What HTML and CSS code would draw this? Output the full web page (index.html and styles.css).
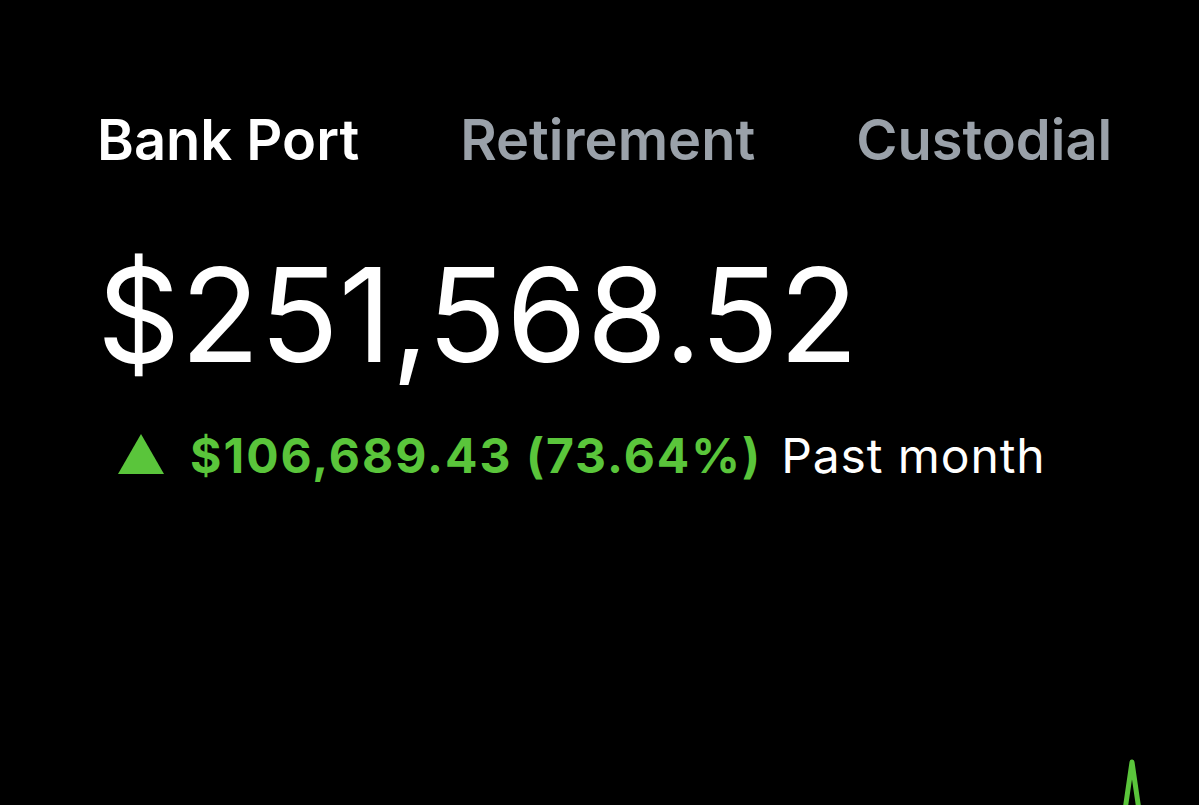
FILE: index.html
```html
<!DOCTYPE html>
<html lang="en">
<head>
  <meta charset="UTF-8">
  <meta name="viewport" content="width=device-width, initial-scale=1.0">
  <title>Portfolio</title>
  <link rel="stylesheet" href="styles.css">
</head>
<body>
  <div id="container">
    <nav class="tabs">
      <span class="tab active">Bank Port</span>
      <span class="tab">Retirement</span>
      <span class="tab">Custodial</span>
    </nav>

    <div class="balance">$251,568.52</div>

    <div class="change">
      <span class="arrow"></span>
      <span class="gain">$106,689.43 (73.64%)</span>
      <span class="period">Past month</span>
    </div>

    <div class="chart">
      <svg width="1199" height="140" viewBox="0 0 1199 140">
        <polyline points="1123,150 1132,88 1141,150" fill="none" stroke="#5ac53b" stroke-width="5" stroke-linejoin="round"/>
      </svg>
    </div>
  </div>
</body>
</html>
```

FILE: styles.css
```css
*{
  margin: 0;
  padding: 0;
}
html, body {
  background-color: #000;
  height: 100%;
  overflow: hidden;
}
body {
  font-family: Inter, "Liberation Sans", Arial, sans-serif;
  color: #fff;
}

#container {
  padding: 108px 0 0 97px;
}

.tabs {
  display: flex;
  gap: 101px;
  font-weight: 600;
  font-size: 56px;
  line-height: 64px;
}

.tab {
  color: #9aa1a9;
}

.tab.active {
  color: #fff;
}

.balance {
  margin-top: 68px;
  font-size: 130px;
  line-height: 150px;
}

.change {
  display: flex;
  align-items: center;
  margin: 38px 0 0 21px;
  font-size: 48px;
  line-height: 56px;
}

.arrow {
  width: 0;
  height: 0;
  border-left: 23px solid transparent;
  border-right: 23px solid transparent;
  border-bottom: 40px solid #5ac53b;
  margin-right: 26px;
  position: relative;
  top: -2px;
}

.gain {
  color: #5ac53b;
  font-weight: 700;
  letter-spacing: 2px;
  margin-right: 19px;
}

.period {
  color: #fff;
  letter-spacing: 0.9px;
}

.chart {
  margin: 190px 0 0 -97px;
}
```
